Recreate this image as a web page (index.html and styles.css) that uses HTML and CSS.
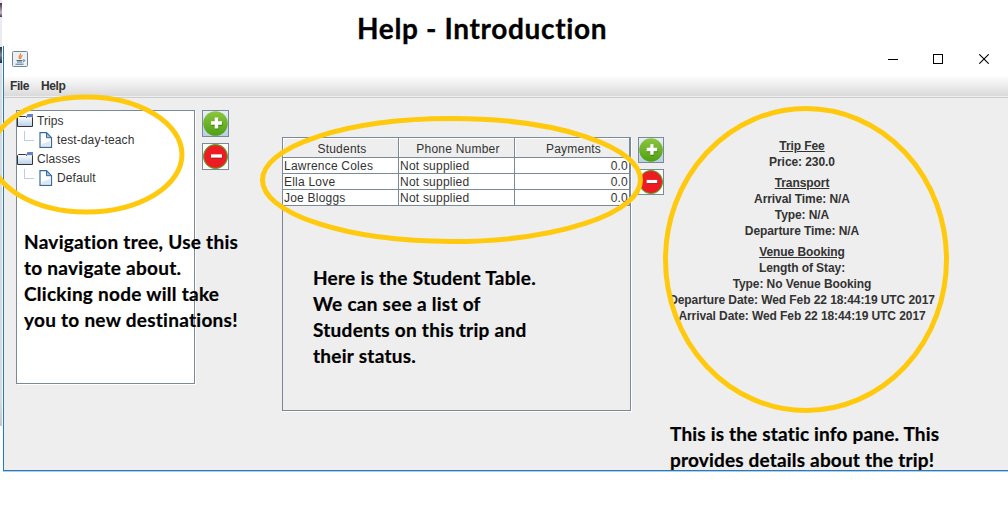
FILE: index.html
```html
<!DOCTYPE html>
<html lang="en">
<head>
<meta charset="utf-8">
<title>Help - Introduction</title>
<link rel="stylesheet" href="styles.css">
</head>
<body>
<svg class="defs" width="0" height="0" aria-hidden="true">
  <defs>
    <linearGradient id="green" x1="0" y1="0" x2="0" y2="1"><stop offset="0" stop-color="#8cc63f"/><stop offset="1" stop-color="#4fa012"/></linearGradient>
    <linearGradient id="folder" x1="0" y1="0" x2="0" y2="1"><stop offset="0" stop-color="#fff"/><stop offset="1" stop-color="#b8cfe5"/></linearGradient>
    <symbol id="i-folder" viewBox="0 0 16 16">
      <path d="M9 4 10.500 1H16V4Z" fill="#6382bf"/>
      <path d="M.5 13.500V4.500L1.500 3.500H8.500L9.500 4.500H15.500V13.500Z" fill="url(#folder)" stroke="#333" />
      <path d="M10 4.500H15" stroke="#dfe9f4"/>
    </symbol>
    <symbol id="i-file" viewBox="0 0 14 16">
      <path d="M1 .700H7.500L12.500 5.700V15.300H1Z" fill="#fff" stroke="#3a6a9b" stroke-width="1.200"/>
      <path d="M2.500 14V12L11 9V14Z" fill="#dce8f4"/>
      <path d="M7.500 1V5.700H12.500Z" fill="#a9c7e4" stroke="#3a6a9b"/>
    </symbol>
    <symbol id="i-plus" viewBox="0 0 25 25">
      <circle cx="12.500" cy="12.500" r="12.300" fill="url(#green)"/>
      <path d="M14 7.500V18.500M8.500 13H19.500" stroke="#397c10" stroke-width="3.500"/>
      <path d="M13.500 6.500V17.500M8 12H19" stroke="#fff" stroke-width="3.500"/>
    </symbol>
    <symbol id="i-minus" viewBox="0 0 25 25">
      <circle cx="12.500" cy="12.500" r="11.900" fill="#ed1c24" stroke="#5fa520" stroke-width="1.100"/>
      <path d="M8.500 12.800H19.500" stroke="#9d1712" stroke-width="3.500"/>
      <path d="M8 12H19" stroke="#fff" stroke-width="3.300"/>
    </symbol>
  </defs>
</svg>

<div class="page">
  <div class="backdrop"><i class="smudge"></i><i class="mark"></i></div>
  <div class="main">
    <h1 class="title"><span>Help - Introduction</span></h1>
    <div class="window">
      <div class="titlebar">
        <svg class="java" width="16" height="16" viewBox="0 0 16 16">
          <rect x=".5" y=".5" width="15" height="15" rx="1" fill="#edf1f5" stroke="#6e8699"/>
          <path d="M8.500 2.500C9.500 4 5.500 5 7.500 8M10.500 4.500C7.500 5.500 9.500 6.500 8.500 8" fill="none" stroke="#e8761f" stroke-width="1.200"/>
          <path d="M4.500 9.500H10.500M5 11H10M3.500 13.200H11.500M11 9C13.500 8.500 13 10.500 10.800 11" fill="none" stroke="#456f8d"/>
        </svg>
        <div class="controls">
          <svg width="10" height="10"><path d="M0 5.500H10" stroke="#000"/></svg>
          <svg width="10" height="10"><rect x=".5" y=".5" width="9" height="9" fill="none" stroke="#000"/></svg>
          <svg width="10" height="10"><path d="M.3.300 9.700 9.700M9.700.300.300 9.700" stroke="#000" stroke-width="1.100"/></svg>
        </div>
      </div>
      <div class="menubar"><span>File</span><span>Help</span></div>
      <div class="content">
        <div class="tree">
          <div class="row"><svg width="16" height="16"><use href="#i-folder"/></svg><span>Trips</span></div>
          <div class="row leaf"><i class="branch"></i><svg width="14" height="16"><use href="#i-file"/></svg><span>test-day-teach</span></div>
          <div class="row"><svg width="16" height="16"><use href="#i-folder"/></svg><span>Classes</span></div>
          <div class="row leaf"><i class="branch"></i><svg width="14" height="16"><use href="#i-file"/></svg><span>Default</span></div>
        </div>
        <div class="buttons">
          <div class="btn tinted"><svg width="25" height="25"><use href="#i-plus"/></svg></div>
          <div class="btn"><svg width="25" height="25"><use href="#i-minus"/></svg></div>
        </div>
        <div class="table">
          <div class="tr head"><div>Students</div><div>Phone Number</div><div>Payments</div></div>
          <div class="tr"><div>Lawrence Coles</div><div>Not supplied</div><div>0.0</div></div>
          <div class="tr"><div>Ella Love</div><div>Not supplied</div><div>0.0</div></div>
          <div class="tr"><div>Joe Bloggs</div><div>Not supplied</div><div>0.0</div></div>
        </div>
        <div class="buttons small">
          <div class="btn tinted"><svg width="24" height="24"><use href="#i-plus"/></svg></div>
          <div class="btn"><svg width="24" height="24"><use href="#i-minus"/></svg></div>
        </div>
        <div class="info">
          <section><u>Trip Fee</u><p>Price: 230.0</p></section>
          <section><u>Transport</u><p>Arrival Time: N/A</p><p>Type: N/A</p><p>Departure Time: N/A</p></section>
          <section><u>Venue Booking</u><p>Length of Stay:</p><p>Type: No Venue Booking</p><p>Departure Date: Wed Feb 22 18:44:19 UTC 2017</p><p>Arrival Date: Wed Feb 22 18:44:19 UTC 2017</p></section>
        </div>
      </div>
    </div>
  </div>

  <svg class="rings" width="1008" height="523" fill="none" stroke="#ffc90e" stroke-width="5">
    <ellipse cx="86.500" cy="154.500" rx="95.500" ry="57.500"/>
    <ellipse cx="451.500" cy="180" rx="189" ry="61.500"/>
    <ellipse cx="806" cy="259.500" rx="140.500" ry="151"/>
  </svg>
  <div class="note note-tree"><div>Navigation tree, Use this</div><div>to navigate about.</div><div>Clicking node will take</div><div>you to new destinations!</div></div>
  <div class="note note-table"><div>Here is the Student Table.</div><div>We can see a list of</div><div>Students on this trip and</div><div>their status.</div></div>
  <div class="note note-info"><div>This is the static info pane. This</div><div>provides details about the trip!</div></div>
</div>
</body>
</html>
```

FILE: styles.css
```css
* { box-sizing: border-box; }
body { margin: 0; background: #fff; font: 12px/16px "Liberation Sans", Arial, sans-serif; color: #333; }
svg { display: block; flex: none; }
.defs { position: absolute; }
.page { position: relative; width: 1008px; height: 523px; overflow: hidden; display: flex; }

.backdrop { width: 2px; height: 426px; background: linear-gradient(#ececf0 0 40px, #d9dadd 80px 400px, #c8c8ca); padding-top: 3px; }
.smudge { display: block; height: 14px; background: linear-gradient(#4a2a6b, #888 40%, #bbb 70%, #4a2a6b); }
.mark { display: block; height: 16px; margin-top: 30px; background: linear-gradient(#333, #7d8794, #222b4a); }

.main { flex: 1; display: flex; flex-direction: column; }
.title { margin: 0; height: 46px; padding: 11px 0 0 355px; font: bold 28px/34px Lato, sans-serif; color: #000; white-space: nowrap; letter-spacing: 0.65px; font-variant-ligatures: none; -webkit-text-stroke: 0.3px #000; }

.window { margin-left: 1px; height: 425px; border-left: 1px solid #1b7cc9; border-bottom: 1px solid #1b7cc9; background: #eee; box-shadow: 0 1px 0 #bccbd9; }
.titlebar { height: 29px; background: #fff; display: flex; justify-content: space-between; padding: 5px 19px 0 8px; }
.controls { display: flex; gap: 35px; padding-top: 3px; }
.controls svg:last-child { margin-left: 1px; }
.menubar { height: 23px; background: linear-gradient(#fff, #dadada 21px, #eee 21px, #eee 22px, #ccc 22px); display: flex; gap: 12px; padding: 3px 0 0 6px; font-weight: bold; letter-spacing: -0.4px; }

.content { display: flex; align-items: flex-start; padding: 12px 0 0 12px; }
.tree { width: 179px; height: 274px; background: #fff; border: 1px solid #7a8a99; box-shadow: 1px 1px 0 #fff; letter-spacing: 0.1px; }
.row { height: 19px; display: flex; align-items: center; gap: 4px; white-space: nowrap; }
.row svg { margin-top: 1px; }
.leaf { gap: 4px; padding-left: 7px; }
.leaf svg { margin-left: 1px; }
.branch { width: 10px; height: 10px; margin: -8px 0 0 0; border-left: 1px solid #b8cfe5; border-bottom: 1px solid #b8cfe5; }

.buttons { margin-left: 7px; display: flex; flex-direction: column; gap: 6px; }
.btn { width: 27px; height: 27px; border: 1px solid #7a8a99; background: #fff; }
.tinted { background: linear-gradient(#e6eff8, #b8cfe5); }
.small { margin-top: 27px; }
.small .btn { width: 26px; height: 26px; }

.table { margin: 27px 0 0 53px; width: 349px; height: 274px; border: 1px solid #7a8a99; box-shadow: 1px 1px 0 #fff; letter-spacing: 0.22px; }
.tr { display: grid; grid-template: 100% / 116px 116px 115px; height: 16px; background: #fff; white-space: nowrap; }
.tr > div { border-right: 1px solid #7a8a99; border-bottom: 1px solid #7a8a99; padding-left: 1px; line-height: 16px; }
.tr > div:last-child { text-align: right; padding-right: 1px; }
.head { height: 20px; }
.tr.head > div { background: #eee; text-align: center; padding: 3px 0 0 3px; box-shadow: inset 1px 1px 0 #fff; }

.info { width: 300px; margin: 28px 0 0 -12px; text-align: center; font-weight: bold; white-space: nowrap; letter-spacing: -0.08px; }
.info section { margin-bottom: 5px; }
.info p { margin: 0; }
.info u { display: block; }

.rings { position: absolute; left: 0; top: 0; }
.note { position: absolute; font: bold 19px/26px Lato, sans-serif; color: #000; white-space: nowrap; letter-spacing: 0.27px; font-variant-ligatures: none; -webkit-text-stroke: 0.2px #000; }
.note-tree { left: 24px; top: 229px; }
.note-table { left: 313px; top: 265px; }
.note-info { left: 670px; top: 421px; letter-spacing: 0.18px; }
```
